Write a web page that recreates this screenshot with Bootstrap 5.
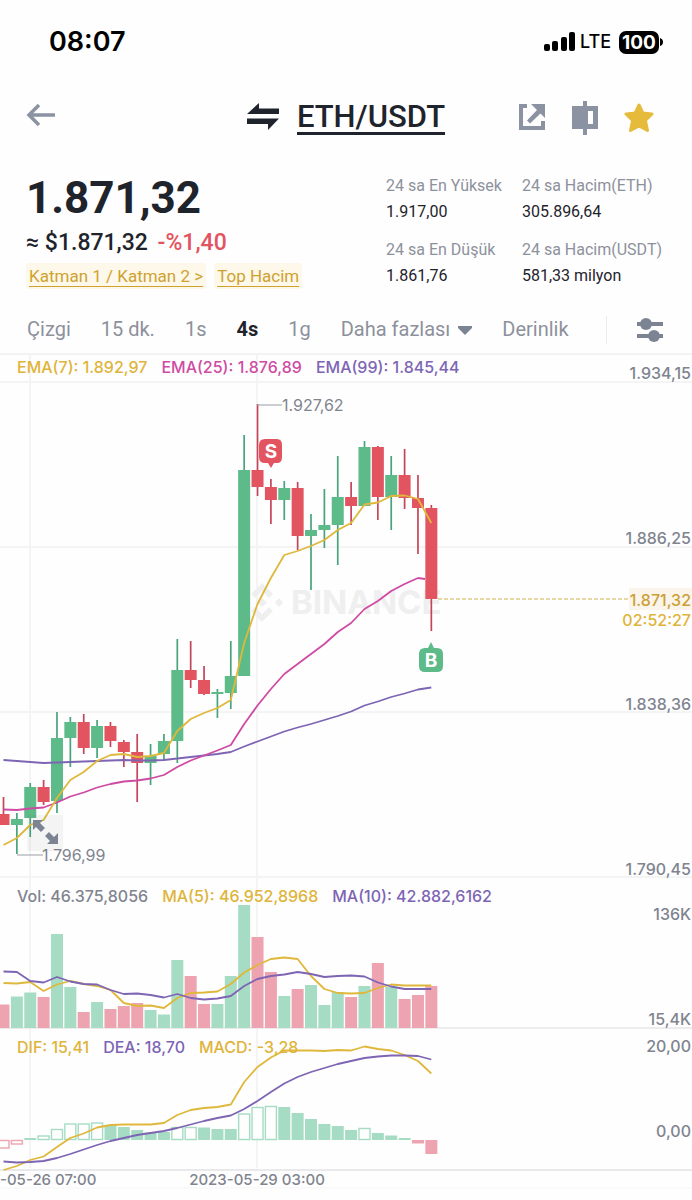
<!DOCTYPE html>
<html lang="tr">
<head>
<meta charset="utf-8">
<meta name="viewport" content="width=device-width, initial-scale=1">
<title>ETH/USDT</title>
<link href="https://cdn.jsdelivr.net/npm/bootstrap@5.3.0/dist/css/bootstrap.min.css" rel="stylesheet">
<style>
  :root { --ink:#1f242c; --muted-ink:#8d919c; --icon:#8b92a1; --gold:#dfb43a; --pink:#cf4ba3; --violet:#7d65b4; --up:#5dba89; --down:#e35461; }
  body { font-family:Roboto,"Noto Sans",sans-serif; color:var(--ink); background:#fefefe; overflow-x:hidden; }
  svg { display:block; }
  button { background:none; border:0; padding:0; color:inherit; }
  .status-row { padding:26px 29px 0 49px; font-family:Inter,sans-serif; color:#000; line-height:32px; }
  .clock { font-size:27px; font-weight:600; }
  .carrier { font-size:18px; font-weight:500; }
  .battery { background:#000; color:#fff; border-radius:7px; font-size:19px; font-weight:700; line-height:23px; width:40px; text-align:center; }
  .title-row { padding:43px 26px 0 26px; display:grid; grid-template-columns:1fr auto 1fr; align-items:center; color:var(--icon); }
  .pair { font-size:31px; font-weight:500; line-height:31px; color:var(--ink); border-bottom:3px solid var(--ink); }
  .tools { gap:25px; padding-right:12px; }
  .summary { padding:38px 30px 0 26px; }
  .last-price { font-size:44px; font-weight:700; line-height:50px; }
  .fiat { font-size:23px; font-weight:500; line-height:40px; }
  .text-down { color:var(--down); }
  .tag-link { font-size:17px; line-height:26px; padding:0 3px; color:#cfa22f; background:#fdf8e9; text-underline-offset:4px; border-radius:2px; }
  .stats { display:grid; grid-template-columns:auto auto; column-gap:20px; row-gap:12px; font-size:16px; line-height:26px; }
  .stats dt { font-weight:400; color:var(--muted-ink); }
  .stats dd { margin:0; }
  .interval-row { padding:17px 29px 0 27px; font-size:20px; line-height:47px; color:var(--muted-ink); border-bottom:2px solid #f3f3f4; }
  .tab-gap { gap:30px; }
  .interval-row .chosen { color:var(--ink); font-weight:700; }
  .rule { width:1px; height:28px; background:#ececee; }
  .legend-row { position:absolute; left:17px; display:flex; gap:14px; font-family:Inter,sans-serif; font-size:16px; font-weight:500; line-height:20px; white-space:nowrap; }
  .c-gold { color:var(--gold); } .c-pink { color:var(--pink); } .c-violet { color:var(--violet); } .c-grey { color:#80848f; }
  .pane text { font-family:Inter,sans-serif; font-size:16px; font-weight:500; fill:#80848f; }
  .pane .day { font-size:15px; }
  .pane .tip { font-size:16px; font-weight:400; }
  .pane .brand { font-size:33px; font-weight:700; fill:#efeff0; }
  .pane .mark-letter { font-size:19px; font-weight:700; fill:#fff; text-anchor:middle; }
  .expand { position:absolute; left:27px; bottom:27px; width:36px; height:36px; background:rgba(110,110,120,.07); color:#7c8493; }
</style>
</head>
<body>
<header>
  <div class="status-row d-flex justify-content-between align-items-center">
    <span class="clock">08:07</span>
    <span class="d-flex align-items-center">
      <svg width="32" height="20" viewBox="0 0 32 20"><rect x="0" y="12" width="6" height="7" rx="2"/><rect x="8" y="9" width="6" height="10" rx="2"/><rect x="17" y="5" width="6" height="14" rx="2"/><rect x="25" y="0" width="6" height="19" rx="2"/></svg>
      <span class="carrier ms-1 me-2">LTE</span>
      <span class="battery">100</span>
      <svg width="4" height="8" viewBox="0 0 4 8"><path d="M1 0Q4 1 4 4Q4 7 1 8Z"/></svg>
    </span>
  </div>
  <nav class="title-row">
    <button type="button" class="justify-self-start text-start" aria-label="Geri"><svg width="30" height="28" viewBox="0 0 30 28" fill="none" stroke="currentColor" stroke-width="3.500"><path d="M3 11H29M13 1L3 11L13 21"/></svg></button>
    <div class="d-flex align-items-center">
      <svg class="me-3" width="34" height="30" viewBox="0 0 34 30" fill="#1f242c"><path d="M0 11L12 0V5.500H32V11ZM0 15.500H32L21 27V21H0Z"/></svg>
      <button type="button" class="pair">ETH/USDT</button>
    </div>
    <div class="tools d-flex justify-content-end align-items-center">
      <button type="button" aria-label="Paylaş"><svg width="28" height="30" viewBox="0 0 28 30" fill="currentColor"><path d="M1 1H9V5H5V23H23V18H27V27H1ZM13 1H27V15L22.500 10.500L12 20.500L9 17.500L19 7Z"/></svg></button>
      <button type="button" aria-label="Görünüm"><svg width="28" height="34" viewBox="0 0 28 34" fill="currentColor"><path fill-rule="evenodd" d="M1 5H12V0H16V5H27V28H16V34H12V28H1ZM17 10V23H22V10Z"/></svg></button>
      <button type="button" aria-label="Favori"><svg width="30" height="32" viewBox="0 0 30 32" fill="#e6bb3c" stroke="#e6bb3c" stroke-width="3" stroke-linejoin="round"><path d="M15 3L18.800 11L28 12L21.400 18.500L23.500 28.500L15 24L6.500 28.500L8.600 18.500L2 12L11.200 11Z"/></svg></button>
    </div>
  </nav>
</header>
<main>
  <section class="summary d-flex justify-content-between">
    <div>
      <div class="last-price">1.871,32</div>
      <div class="fiat">≈ $1.871,32 <span class="text-down ms-1">-%1,40</span></div>
      <div class="d-flex gap-2"><a class="tag-link" href="#">Katman 1 / Katman 2 &gt;</a><a class="tag-link" href="#">Top Hacim</a></div>
    </div>
    <dl class="stats mb-0">
      <div><dt>24 sa En Yüksek</dt><dd>1.917,00</dd></div>
      <div><dt>24 sa Hacim(ETH)</dt><dd>305.896,64</dd></div>
      <div><dt>24 sa En Düşük</dt><dd>1.861,76</dd></div>
      <div><dt>24 sa Hacim(USDT)</dt><dd>581,33 milyon</dd></div>
    </dl>
  </section>
  <div class="interval-row d-flex justify-content-between align-items-center">
    <div class="d-flex align-items-center tab-gap">
      <button type="button">Çizgi</button><button type="button">15 dk.</button><button type="button">1s</button><button type="button" class="chosen">4s</button><button type="button">1g</button>
      <button type="button" class="d-flex align-items-center gap-2">Daha fazlası <svg width="14" height="10" viewBox="0 0 14 10" fill="#7c8493"><path d="M0 1H14V3L7 10L0 3Z"/></svg></button>
      <button type="button">Derinlik</button>
    </div>
    <div class="d-flex align-items-center tab-gap">
      <span class="rule"></span>
      <button type="button" aria-label="Ayarlar"><svg width="26" height="26" viewBox="0 0 26 26" fill="#7c8493"><path d="M0 5H26V9H0ZM0 17H26V21H0Z"/><circle cx="9" cy="7" r="6"/><circle cx="17" cy="19" r="6"/></svg></button>
    </div>
  </div>

  <section class="position-relative pane">
    <div class="legend-row" style="top:2px"><span class="c-gold">EMA(7): 1.892,97</span><span class="c-pink">EMA(25): 1.876,89</span><span class="c-violet">EMA(99): 1.845,44</span></div>
    <svg width="100%" viewBox="0 355 692 523">
      <path d="M0 382H692M0 547H692M0 712H692M0 877H692M30 355V878M257 355V878" stroke="#f4f4f5" stroke-width="2" fill="none"/>
      <g fill="#efeff0"><path d="M251 594L262 583L273 594L269 598L262 591L255 598ZM251 611L262 622L273 611L269 607L262 614L255 607ZM262 598L267 602.500L262 607L257 602.500ZM279 598L283 602.500L279 607L275 602.500Z"/></g>
      <text class="brand" x="291" y="614">BINANCE</text>
      <g id="candles"></g>
      <g id="priceLines"></g>
      <path d="M438 599H629" stroke="#e6d9a6" stroke-width="2" stroke-dasharray="4 2"/>
      <path d="M257 405H282M17 855H43" stroke="#9a9da6" stroke-width="1"/>
      <text class="tip" x="282" y="411">1.927,62</text>
      <text class="tip" x="42" y="861">1.796,99</text>
      <path fill="#e35461" d="M265 439H277Q282 439 282 445V457Q282 463 277 463H274L271 468L268 463H265Q259 463 259 457V445Q259 439 265 439Z"/>
      <text class="mark-letter" x="271" y="458">S</text>
      <path fill="#5dba89" d="M425 648H428L431 642L434 648H437Q443 648 443 654V666Q443 672 437 672H425Q419 672 419 666V654Q419 648 425 648Z"/>
      <text class="mark-letter" x="431" y="667">B</text>
      <rect x="629" y="588" width="63" height="22" fill="#faf4ea"/>
      <g text-anchor="end">
        <text x="691" y="379">1.934,15</text><text x="691" y="544">1.886,25</text>
        <text x="691" y="606" style="fill:#cb9f34">1.871,32</text><text x="691" y="626" style="fill:#dfb43a">02:52:27</text>
        <text x="691" y="710">1.838,36</text><text x="691" y="875">1.790,45</text>
      </g>
    </svg>
    <button type="button" class="expand" aria-label="Genişlet"><svg width="36" height="36" viewBox="0 0 36 36" fill="currentColor"><path d="M6 5H16L13 8L18 13L14 17L9 12L6 15ZM31 29H20L23 26L18 21L22 17L27 22L31 18Z"/></svg></button>
  </section>

  <section class="position-relative pane">
    <div class="legend-row" style="top:8px"><span class="c-grey">Vol: 46.375,8056</span><span class="c-gold">MA(5): 46.952,8968</span><span class="c-violet">MA(10): 42.882,6162</span></div>
    <svg width="100%" viewBox="0 878 692 151">
      <path d="M30 878V1029M257 878V1029" stroke="#f4f4f5" stroke-width="2"/><path d="M0 1028H692" stroke="#ececee" stroke-width="2"/>
      <g id="volumeBars"></g><g id="volumeLines"></g>
      <g text-anchor="end"><text x="691" y="920">136K</text><text x="691" y="1025">15,4K</text></g>
    </svg>
  </section>

  <section class="position-relative pane">
    <div class="legend-row" style="top:8px"><span class="c-gold">DIF: 15,41</span><span class="c-violet">DEA: 18,70</span><span class="c-gold">MACD: -3,28</span></div>
    <svg width="100%" viewBox="0 1029 692 160">
      <path d="M30 1029V1168M257 1029V1168" stroke="#f4f4f5" stroke-width="2"/>
      <path d="M0 1170H692" stroke="#e9e9eb" stroke-width="2"/><path d="M0 1188H692" stroke="#f5f5f6" stroke-width="1"/>
      <g id="macdBars"></g><g id="macdLines"></g>
      <g text-anchor="end"><text x="691" y="1052">20,00</text><text x="691" y="1137">0,00</text></g>
      <text class="day" x="0" y="1185">-05-26 07:00</text><text class="day" text-anchor="middle" x="257" y="1185">2023-05-29 03:00</text>
    </svg>
  </section>
</main>
<script src="https://cdn.jsdelivr.net/npm/bootstrap@5.3.0/dist/js/bootstrap.bundle.min.js"></script>
<script>
const px = i => 3.5 + i * 13.37;
const put = (id, markup) => { document.getElementById(id).innerHTML = markup; };
const line = (ys, color) => `<polyline fill="none" stroke="${color}" stroke-width="1.8" stroke-linejoin="round" points="${ys.map((y, i) => px(i).toFixed(1) + ',' + y).join(' ')}"/>`;
const sides = 'RGGRGGRGRRRGGGRRGGGRRGRGGGRGRGRRR';
// high, body top, body bottom, low
const candles = [[797,814,825,825],[813,819,825,854],[783,787,818,837],[780,787,802,805],[712,738,801,813],[717,722,738,767],[714,722,748,754],[720,726,748,758],[722,726,741,747],[740,742,752,767],[734,752,763,802],[744,756,763,785],[734,741,754,760],[639,670,741,763],[641,670,680,688],[666,680,694,695],[689,692,694,718],[641,676,693,709],[435,470,676,676],[404,470,487,496],[479,487,500,524],[481,488,500,520],[482,488,536,550],[514,530,536,590],[489,525,530,548],[456,497,525,565],[482,497,506,525],[441,447,506,506],[446,447,497,520],[456,475,497,530],[449,475,498,509],[475,498,508,554],[505,508,599,631]];
put('candles', candles.map(([h, t, b, l], i) => {
  const up = sides[i] === 'G', x = px(i);
  return `<path d="M${x} ${h}V${l}" stroke="${up ? '#48a37c' : '#c54458'}" stroke-width="1.7"/><rect x="${x - 6}" y="${t}" width="12" height="${b - t}" fill="${up ? '#5dba89' : '#e35461'}"/>`;
}).join(''));
put('priceLines',
  line([760,761,762,763,762.5,762,761.5,761,760.5,760,760.5,760.5,760,758.5,757,755.5,754,752,746.5,741.5,736.5,731.5,727.5,724,720,716,711.5,705.5,701.5,697,693.5,689.5,687.5], '#7d65b4') +
  line([809.5,810,808.5,807.5,802.5,796.5,792.5,787.5,784,781.5,780.5,778.5,775,767,760.5,755.5,750.5,745,724,705.5,689,674,664,654,644,632,623,609,601,591,584,578], '#cf4ba3') + `<path d="M418 578L425 579" stroke="#cf4ba3" stroke-width="1.8"/>` +
  line([845,838,825,820,798,780,772,761,755,754,757,756,753,731,719,713,708,700,643,604,578,555,551,546,540,530,523,504.5,502.5,496,495.5,499,523], '#dfb83b'));
const tops = [1004.5,996.5,992.5,997,934,987,1012,1002,1009,1006,1003,1010,1014.5,960,976,1004,1004,976,905,937,972,996,989,985,1005,992,997,986,963,987,999,995,986];
put('volumeBars', tops.map((t, i) => `<rect x="${px(i) - 6}" y="${t}" width="12" height="${1028 - t}" fill="${sides[i] === 'G' ? '#a6dcc4' : '#eda4b0'}"/>`).join(''));
put('volumeLines',
  line([983,983.5,982,991,984.5,981,984,986,990,1003,1006,1005.5,1008,998,993,992.5,991.5,984,972.5,965,959,957.5,959,976,989,993,993.5,993,988,984.5,985.5,985.5,985.5], '#dfb83b') +
  line([971.5,972,981,982.5,977,981.5,984,984.5,990,994,993.5,995,997.5,994,998,999.5,998.5,996,986,979,976,974.5,972,974,977,976,975.5,976.5,982.5,986.5,989,989,989], '#7d65b4'));
const macd = [1148.5,1144.5,1138,1135.5,1129,1123.5,1123.5,1122.5,1125,1127,1130,1132.5,1132,1127,1127,1127.5,1129,1129,1113.5,1107,1106,1107,1113,1119,1124,1126,1130,1128,1133,1135.5,1138,1143.5,1154];
const hollow = [0,1,3,4,5,6,7,13,14,18,19,20,27];
put('macdBars', macd.map((y, i) => {
  const color = y > 1140 ? '#eda4b0' : '#a6dcc4', top = Math.min(y, 1140), h = Math.abs(y - 1140);
  return hollow.includes(i)
    ? `<rect x="${px(i) - 5.5}" y="${top + .5}" width="11" height="${h - 1}" fill="#fefefe" stroke="${color}" stroke-width="1.4"/>`
    : `<rect x="${px(i) - 6}" y="${top}" width="12" height="${h}" fill="${color}"/>`;
}).join(''));
put('macdLines',
  line([1170,1166,1160,1156.5,1147,1138,1133.5,1127.5,1125,1124.5,1124.5,1124.5,1123,1115,1110,1108,1107,1104.5,1082,1067,1057.5,1050.5,1050.5,1050.5,1051,1050,1050.5,1046.5,1049,1050.5,1055,1061,1073.5], '#dfb83b') +
  line([1161.5,1162.5,1162,1161,1158,1154,1149.5,1145,1141,1138,1135,1133,1131,1128,1124.5,1121,1118,1115.5,1109,1101,1092,1083.5,1077,1072,1068,1064,1061,1058,1056.5,1055.5,1055.5,1056,1059.5], '#7d65b4'));
</script>
</body>
</html>
